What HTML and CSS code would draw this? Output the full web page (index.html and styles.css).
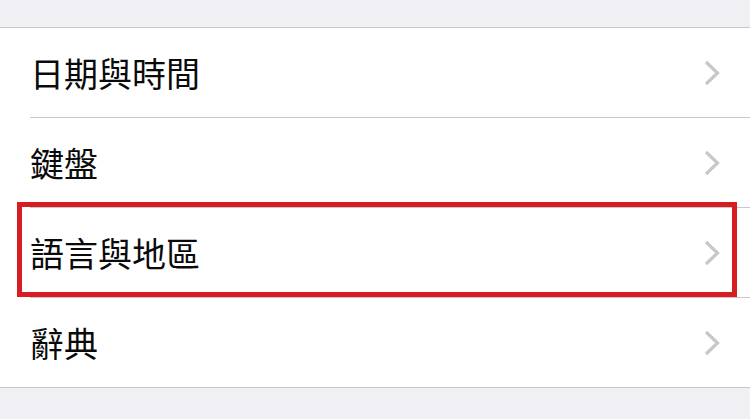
FILE: index.html
```html
<!DOCTYPE html>
<html lang="zh-Hant">
<head>
    <meta charset="UTF-8">
    <meta name="viewport" content="width=device-width, initial-scale=1.0">
    <title>一般</title>
    <link rel="stylesheet" href="styles.css">
</head>
<body>
    <ul class="settings-list">
        <li class="row">
            <div class="row-inner">
                <span class="label">日期與時間</span>
                <svg class="chevron" width="16" height="26" viewBox="0 0 16 26"><polyline points="2,2 13.5,13 2,24"/></svg>
            </div>
        </li>
        <li class="row">
            <div class="row-inner">
                <span class="label">鍵盤</span>
                <svg class="chevron" width="16" height="26" viewBox="0 0 16 26"><polyline points="2,2 13.5,13 2,24"/></svg>
            </div>
        </li>
        <li class="row highlighted">
            <div class="row-inner">
                <span class="label">語言與地區</span>
                <svg class="chevron" width="16" height="26" viewBox="0 0 16 26"><polyline points="2,2 13.5,13 2,24"/></svg>
            </div>
            <div class="mark"></div>
        </li>
        <li class="row">
            <div class="row-inner">
                <span class="label">辭典</span>
                <svg class="chevron" width="16" height="26" viewBox="0 0 16 26"><polyline points="2,2 13.5,13 2,24"/></svg>
            </div>
        </li>
    </ul>
</body>
</html>
```

FILE: styles.css
```css
body {
    margin: 0;
    padding: 27px 0 0;
    background-color: #efeff4;
    font-family: "Noto Sans CJK TC", "Noto Sans", sans-serif;
    height: 392px;
}
.settings-list {
    list-style: none;
    margin: 0;
    padding: 0;
    background-color: #fff;
    border-top: 1px solid #c8c7cc;
    border-bottom: 1px solid #c8c7cc;
}
.row {
    position: relative;
    padding-left: 30px;
}
.row-inner {
    display: flex;
    align-items: center;
    justify-content: space-between;
    height: 89px;
    padding-right: 30px;
    border-bottom: 1px solid #c8c7cc;
}
.row:last-child .row-inner {
    border-bottom: none;
}
.label {
    font-size: 34px;
    color: #0a0a0a;
    line-height: 1;
}
.chevron {
    display: block;
    fill: none;
    stroke: #c7c7cc;
    stroke-width: 3.2;
}
.mark {
    position: absolute;
    top: -6px;
    left: 17px;
    width: 720px;
    height: 95px;
    box-sizing: border-box;
    border: 5px solid #d71d22;
}
```
